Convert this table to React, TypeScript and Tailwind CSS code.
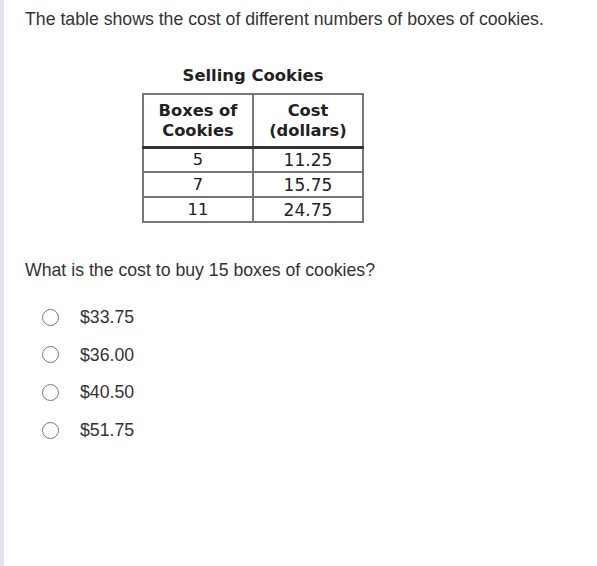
import React from 'react';

const rows = [
    { boxes: '5', cost: '11.25' },
    { boxes: '7', cost: '15.75' },
    { boxes: '11', cost: '24.75' },
];

const choices = ['$33.75', '$36.00', '$40.50', '$51.75'];

const CookieTable = () => (
    <div className="flex flex-col items-center w-[222px] ml-[117px] mt-[36px]">
        <div className="font-['DejaVu_Sans',Verdana,sans-serif] font-bold text-[16.4px] text-[#222] leading-[20px] mb-[7px]">
            Selling Cookies
        </div>
        <table className="w-[222px] border-collapse font-['DejaVu_Sans',Verdana,sans-serif] text-[16.3px] text-[#222]">
            <thead>
                <tr className="h-[53px]">
                    <th className="w-[111px] border-2 border-[#777] border-b-[3px] border-b-[#333] font-bold leading-[20px] pt-[2px]">
                        Boxes of<br />Cookies
                    </th>
                    <th className="w-[111px] border-2 border-[#777] border-b-[3px] border-b-[#333] font-bold leading-[20px] pt-[2px]">
                        Cost<br />(dollars)
                    </th>
                </tr>
            </thead>
            <tbody>
                {rows.map((r) => (
                    <tr key={r.boxes} className="h-[25px]">
                        <td className="border-2 border-[#777] text-center leading-[20px] pt-[1px]">{r.boxes}</td>
                        <td className="border-2 border-[#777] text-center leading-[20px] pt-[1px] text-[17px]">{r.cost}</td>
                    </tr>
                ))}
            </tbody>
        </table>
    </div>
);

const App = () => {
    return (
        <div className="flex w-[597px] h-[566px] bg-white">
            <div className="w-[4px] h-full bg-[#e2e2ee]" />
            <div className="flex-1 pl-[21px] pt-[8px] font-['Liberation_Sans',Arial,sans-serif] text-[#333]">
                <p className="text-[17.7px] leading-[22px]">
                    The table shows the cost of different numbers of boxes of cookies.
                </p>
                <CookieTable />
                <p className="text-[17.7px] leading-[22px] mt-[36px]">
                    What is the cost to buy 15 boxes of cookies?
                </p>
                <div className="flex flex-col gap-[15.7px] mt-[25px] pl-[17px]">
                    {choices.map((c) => (
                        <label key={c} className="flex items-center h-[22px]">
                            <span className="w-[17px] h-[17px] rounded-full border border-[#777] bg-white" />
                            <span className="ml-[21px] text-[17.7px] leading-[22px]">{c}</span>
                        </label>
                    ))}
                </div>
            </div>
        </div>
    );
};

export default App;
